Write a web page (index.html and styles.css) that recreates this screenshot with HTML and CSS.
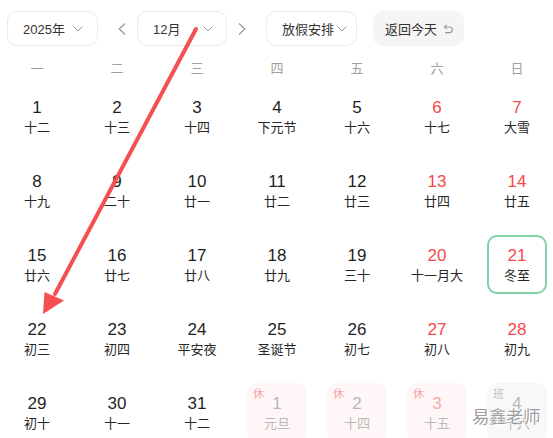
FILE: index.html
```html
<!DOCTYPE html>
<html lang="zh">
<head>
<meta charset="utf-8">
<link rel="stylesheet" href="styles.css">
</head>
<body>
<div class="page">
  <div class="toolbar">
    <div class="select year"><span>2025年</span><svg class="chev" width="10" height="6" viewBox="0 0 10 6"><path d="M0.5 0.5 L5 5 L9.5 0.5" fill="none" stroke="#999" stroke-width="1"/></svg></div>
    <svg class="nav prev" width="8" height="12" viewBox="0 0 8 12"><path d="M7 0.5 L1.2 6 L7 11.5" fill="none" stroke="#999" stroke-width="1.2"/></svg>
    <div class="select month"><span>12月</span><svg class="chev" width="10" height="6" viewBox="0 0 10 6"><path d="M0.5 0.5 L5 5 L9.5 0.5" fill="none" stroke="#999" stroke-width="1"/></svg></div>
    <svg class="nav next" width="8" height="12" viewBox="0 0 8 12"><path d="M1 0.5 L6.8 6 L1 11.5" fill="none" stroke="#999" stroke-width="1.2"/></svg>
    <div class="select holiday"><span>放假安排</span><svg class="chev" width="10" height="6" viewBox="0 0 10 6"><path d="M0.5 0.5 L5 5 L9.5 0.5" fill="none" stroke="#999" stroke-width="1"/></svg></div>
    <div class="today-btn"><span>返回今天</span><svg width="10" height="10" viewBox="0 0 10 10"><path d="M1.5 3 H6.5 A2.8 2.8 0 0 1 6.5 8.6 H2" fill="none" stroke="#999" stroke-width="1.1"/><path d="M3.6 0.9 L1.5 3 L3.6 5.1" fill="none" stroke="#999" stroke-width="1.1"/></svg></div>
  </div>

  <div class="weekdays">
    <div>一</div><div>二</div><div>三</div><div>四</div><div>五</div><div>六</div><div>日</div>
  </div>

  <div class="grid">
    <div class="cell"><div class="num">1</div><div class="lunar">十二</div></div>
    <div class="cell"><div class="num">2</div><div class="lunar">十三</div></div>
    <div class="cell"><div class="num">3</div><div class="lunar">十四</div></div>
    <div class="cell"><div class="num">4</div><div class="lunar">下元节</div></div>
    <div class="cell"><div class="num">5</div><div class="lunar">十六</div></div>
    <div class="cell weekend"><div class="num">6</div><div class="lunar">十七</div></div>
    <div class="cell weekend"><div class="num">7</div><div class="lunar">大雪</div></div>

    <div class="cell"><div class="num">8</div><div class="lunar">十九</div></div>
    <div class="cell"><div class="num">9</div><div class="lunar">二十</div></div>
    <div class="cell"><div class="num">10</div><div class="lunar">廿一</div></div>
    <div class="cell"><div class="num">11</div><div class="lunar">廿二</div></div>
    <div class="cell"><div class="num">12</div><div class="lunar">廿三</div></div>
    <div class="cell weekend"><div class="num">13</div><div class="lunar">廿四</div></div>
    <div class="cell weekend"><div class="num">14</div><div class="lunar">廿五</div></div>

    <div class="cell"><div class="num">15</div><div class="lunar">廿六</div></div>
    <div class="cell"><div class="num">16</div><div class="lunar">廿七</div></div>
    <div class="cell"><div class="num">17</div><div class="lunar">廿八</div></div>
    <div class="cell"><div class="num">18</div><div class="lunar">廿九</div></div>
    <div class="cell"><div class="num">19</div><div class="lunar">三十</div></div>
    <div class="cell weekend"><div class="num">20</div><div class="lunar">十一月大</div></div>
    <div class="cell weekend selected"><div class="num">21</div><div class="lunar">冬至</div></div>

    <div class="cell"><div class="num">22</div><div class="lunar">初三</div></div>
    <div class="cell"><div class="num">23</div><div class="lunar">初四</div></div>
    <div class="cell"><div class="num">24</div><div class="lunar">平安夜</div></div>
    <div class="cell"><div class="num">25</div><div class="lunar">圣诞节</div></div>
    <div class="cell"><div class="num">26</div><div class="lunar">初七</div></div>
    <div class="cell weekend"><div class="num">27</div><div class="lunar">初八</div></div>
    <div class="cell weekend"><div class="num">28</div><div class="lunar">初九</div></div>

    <div class="cell"><div class="num">29</div><div class="lunar">初十</div></div>
    <div class="cell"><div class="num">30</div><div class="lunar">十一</div></div>
    <div class="cell"><div class="num">31</div><div class="lunar">十二</div></div>
    <div class="cell other rest"><span class="tag">休</span><div class="num">1</div><div class="lunar">元旦</div></div>
    <div class="cell other rest"><span class="tag">休</span><div class="num">2</div><div class="lunar">十四</div></div>
    <div class="cell other rest weekend"><span class="tag">休</span><div class="num">3</div><div class="lunar">十五</div></div>
    <div class="cell other work"><span class="tag">班</span><div class="num">4</div><div class="lunar">十六</div></div>
  </div>

  <div class="watermark">易鑫老师</div>

  <svg class="arrow" width="553" height="438" viewBox="0 0 553 438">
    <line x1="196" y1="29" x2="55" y2="294" stroke="#f54f52" stroke-width="4" stroke-linecap="round"/>
    <polygon points="43,314 44.5,292 64,300.5" fill="#f54f52"/>
  </svg>
</div>
</body>
</html>
```

FILE: styles.css
```css
html, body {
  margin: 0;
  padding: 0;
  background: #fff;
  overflow: hidden;
}

.page {
  position: relative;
  width: 553px;
  height: 438px;
  overflow: hidden;
  font-family: "Liberation Sans", "Noto Sans CJK SC", sans-serif;
  color: #1f1f1f;
}

.toolbar {
  display: flex;
  align-items: center;
  padding: 11px 0 0 7px;
  height: 35px;
}

.select {
  box-sizing: border-box;
  height: 35px;
  width: 91px;
  border: 1px solid #ebebeb;
  border-radius: 10px;
  display: flex;
  align-items: center;
  justify-content: space-between;
  padding: 0 14px 0 15px;
  font-size: 13px;
  color: #333;
  background: #fff;
}

.select.month {
  width: 90px;
  padding-right: 13px;
}

.select.holiday {
  padding-right: 9px;
}

.chev {
  flex: none;
}

.nav {
  flex: none;
}

.nav.prev {
  margin: 0 11px 0 20px;
}

.nav.next {
  margin: 0 20px 0 11px;
}

.today-btn {
  box-sizing: border-box;
  height: 35px;
  width: 91px;
  margin-left: 16px;
  border-radius: 10px;
  background: #f5f5f5;
  display: flex;
  align-items: center;
  gap: 6px;
  padding-left: 12px;
  font-size: 13px;
  color: #333;
}

.weekdays {
  display: grid;
  grid-template-columns: repeat(7, 80px);
  margin: 13px 0 0 -3px;
  width: 560px;
  font-size: 13px;
  line-height: 20px;
  color: #9f9f9f;
  text-align: center;
}

.grid {
  display: grid;
  grid-template-columns: repeat(7, 80px);
  grid-auto-rows: 59px;
  row-gap: 15px;
  margin: 8px 0 0 -3px;
  width: 560px;
  justify-items: center;
}

.cell {
  position: relative;
  box-sizing: border-box;
  width: 60px;
  height: 59px;
  border-radius: 10px;
  padding-top: 11px;
  text-align: center;
}

.num {
  font-size: 17px;
  line-height: 20px;
  color: #1f1f1f;
}

.lunar {
  font-size: 13px;
  line-height: 20px;
  color: #262626;
  white-space: nowrap;
}

.weekend .num {
  color: #f5484b;
}

.selected {
  border: 2px solid #84d0a6;
  padding-top: 9px;
}

.other .num,
.other .lunar {
  color: #b8b8b8;
}

.other.weekend .num {
  color: #f8a7a7;
}

.rest {
  background: #fff7f7;
}

.work {
  background: #f8f8fa;
}

.tag {
  position: absolute;
  left: 6px;
  top: 5px;
  font-size: 11px;
  line-height: 12px;
}

.rest .tag {
  color: #f6a2a2;
}

.work .tag {
  color: #c0c0c0;
}

.watermark {
  position: absolute;
  left: 472px;
  top: 405px;
  font-size: 17.5px;
  line-height: 22px;
  font-family: "Noto Sans CJK SC", sans-serif;
  color: rgba(140, 140, 140, 0.85);
  text-shadow: 1px 1px 0 #fff, -1px 0 0 rgba(255,255,255,0.8);
  letter-spacing: -0.5px;
}

.arrow {
  position: absolute;
  left: 0;
  top: 0;
  pointer-events: none;
}
```
